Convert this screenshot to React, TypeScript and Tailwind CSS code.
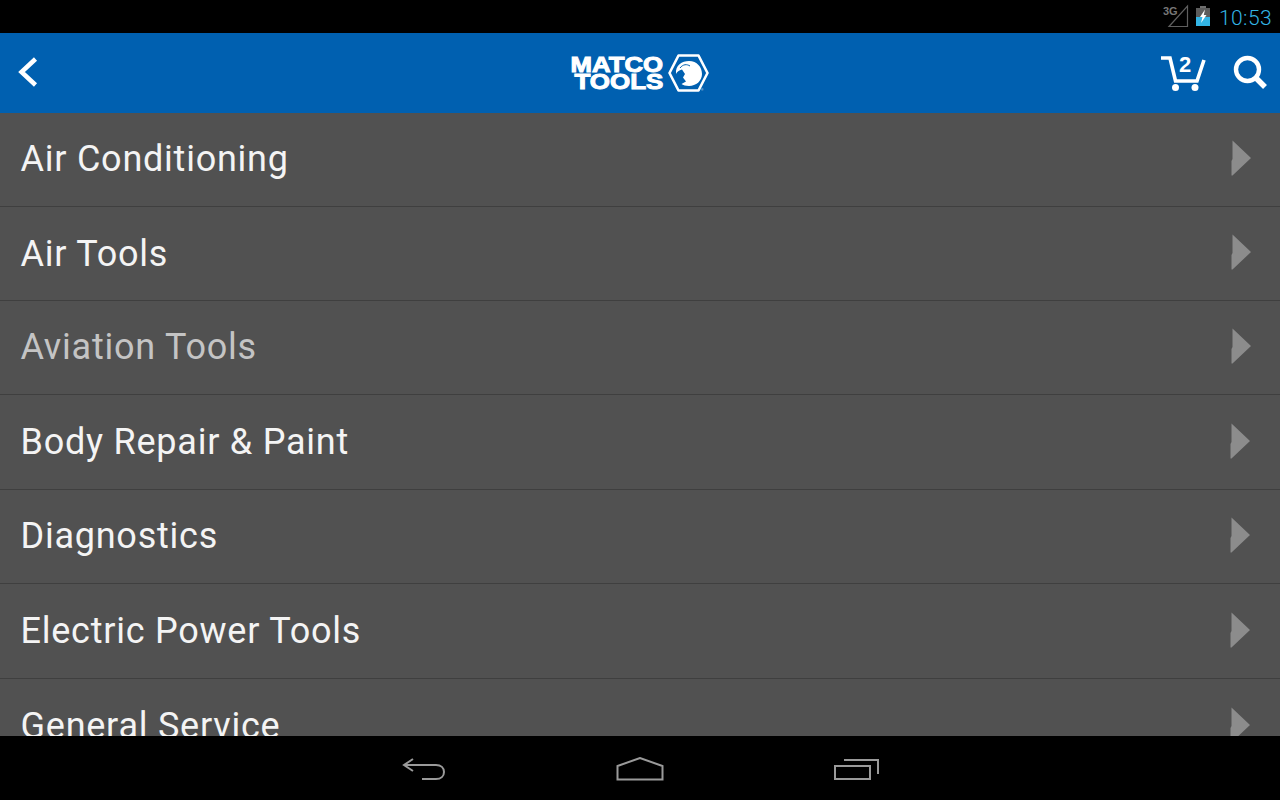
import React from "react";

const rows = [
  { label: "Air Conditioning", h: "h-[94px]", color: "text-[#f4f4f4]", ax: "pr-[28px]", tp: "pb-[1px]", ap: "pb-[4px]" },
  { label: "Air Tools", h: "h-[94px]", color: "text-[#f4f4f4]", ax: "pr-[28px]", tp: "pb-0", ap: "pb-[3px]" },
  { label: "Aviation Tools", h: "h-[94px]", color: "text-[#c4c4c4]", ax: "pr-[28px]", tp: "pb-[1px]", ap: "pb-[4px]" },
  { label: "Body Repair & Paint", h: "h-[95px]", color: "text-[#f4f4f4]", ax: "pr-[29px]", tp: "pb-[1px]", ap: "pb-[2px]" },
  { label: "Diagnostics", h: "h-[94px]", color: "text-[#f4f4f4]", ax: "pr-[29px]", tp: "pb-[1px]", ap: "pb-[4px]" },
  { label: "Electric Power Tools", h: "h-[95px]", color: "text-[#f4f4f4]", ax: "pr-[29px]", tp: "pb-[1px]", ap: "pb-[3px]" },
  { label: "General Service", h: "h-[95px]", color: "text-[#f4f4f4]", ax: "pr-[29px]", tp: "pb-[1px]", ap: "pb-[3px]" },
];

function Arrow({ pad }: { pad: string }) {
  return (
    <div className={`${pad} shrink-0`}>
      <svg width="21" height="36" viewBox="0 0 21 36" className="block">
        <path d="M1.5 0.5 L20 18 L1.5 35.5 L0.5 35.5 L0.5 21 L1.5 19 Z" fill="#8c8c8c" />
      </svg>
    </div>
  );
}

function Logo() {
  return (
    <div className="flex items-center gap-[5px] w-[137px] mr-[4px]">
      <div className="flex flex-col items-end w-[91px] shrink-0 font-['Liberation_Sans',sans-serif] font-bold text-white text-[22px] leading-[17px] [-webkit-text-stroke:1px_white]">
        <span className="block h-[17px] whitespace-nowrap scale-x-[1.17] origin-right">MATCO</span>
        <span className="block h-[17px] whitespace-nowrap scale-x-[1.18] origin-right">TOOLS</span>
      </div>
      <svg width="41" height="38" viewBox="0 0 41 38" className="shrink-0">
        <path d="M10.5 1.5 H30.5 L39.5 19 L30.5 36.5 H10.5 L1.5 19 Z" fill="none" stroke="white" strokeWidth="2.6" strokeLinejoin="round" />
        <path d="M8 20 C7 11 14 7 21 7 C29 7 34 13 34 20 C34 27 28 32 21 32 C18 32 15 31 13.5 30 L18 27.5 L15 23.5 L17 20 L14 15.5 C11 16 9 18 8 20 Z" fill="white" />
        <path d="M12 14 C15 10 19 10 22 12" fill="none" stroke="#0060b0" strokeWidth="1" />
        <text x="33" y="37" fontSize="3" fill="white" fontFamily="Liberation Sans, sans-serif">®</text>
      </svg>
    </div>
  );
}

export default function App() {
  return (
    <div className="w-[1280px] h-[800px] flex flex-col overflow-hidden bg-black font-['Roboto',sans-serif]">
      {/* Status bar */}
      <div className="h-[33px] shrink-0 bg-black flex items-end justify-end pr-[8px]">
        <div className="relative w-[26px] h-[28px] mr-[7px] mb-[5px]">
          <span className="absolute left-0 top-[5px] text-[11px] leading-[12px] font-bold text-[#777777] font-['Liberation_Sans',sans-serif]">3G</span>
          <svg width="26" height="28" viewBox="0 0 26 28" className="absolute inset-0">
            <path d="M24.5 6 V26.5 H6 Z" fill="none" stroke="#5f5f5f" strokeWidth="1.2" />
          </svg>
        </div>
        <svg width="14" height="20" viewBox="0 0 14 20" className="mb-[7px] mr-[9px]">
          <rect x="4" y="0" width="6" height="2" fill="#6e6e6e" />
          <rect x="0" y="2" width="14" height="18" fill="#5c5c5c" />
          <rect x="0" y="11" width="14" height="9" fill="#33b5e5" />
          <path d="M9 3.5 L4 11 H6.5 L5 17 L10.5 9 H7.8 Z" fill="white" />
        </svg>
        <span className="text-[21px] leading-[33px] text-[#33b5e5] tracking-[0.4px] font-light mb-[-2px]">10:53</span>
      </div>

      {/* Action bar */}
      <div className="h-[80px] shrink-0 bg-[#0060b0] flex items-center pl-[18px] pr-[13px]">
        <div className="flex-1 flex items-center pb-[2px]">
          <svg width="20" height="30" viewBox="0 0 20 30">
            <path d="M17.5 2 L3.5 15 L17.5 28" fill="none" stroke="white" strokeWidth="4.5" />
          </svg>
        </div>
        <Logo />
        <div className="flex-1 flex items-center justify-end gap-[27px]">
          <div className="relative w-[46px] h-[38px]">
            <svg width="46" height="38" viewBox="0 0 46 38">
              <path d="M1 4 H10 L15.5 27 H37 L44 6" fill="none" stroke="white" strokeWidth="3.6" strokeLinejoin="miter" />
              <circle cx="15.5" cy="33.5" r="3.5" fill="white" />
              <circle cx="35" cy="33.5" r="3.5" fill="white" />
            </svg>
            <span className="absolute left-[19px] top-[-1px] text-[22px] leading-[24px] font-bold text-white font-['Liberation_Sans',sans-serif]">2</span>
          </div>
          <svg width="34" height="34" viewBox="0 0 34 34" className="mb-[3px]">
            <circle cx="14.5" cy="14.5" r="11.5" fill="none" stroke="white" strokeWidth="4.4" />
            <path d="M23 23 L32 32" stroke="white" strokeWidth="5.5" />
          </svg>
        </div>
      </div>

      {/* List */}
      <div className="flex-1 min-h-0 overflow-hidden bg-[#515151]">
        {rows.map((r) => (
          <div
            key={r.label}
            className={`${r.h} flex items-center justify-between pl-[20.5px] ${r.ax} border-b border-[#3f3f3f]`}
          >
            <span className={`text-[36px] leading-[44px] tracking-[0.76px] ${r.tp} ${r.color}`}>{r.label}</span>
            <Arrow pad={r.ap} />
          </div>
        ))}
      </div>

      {/* Nav bar */}
      <div className="h-[64px] shrink-0 bg-black flex items-center justify-center pl-[1px] pt-[1px]">
        <div className="flex items-center gap-[170px]">
          <svg width="44" height="24" viewBox="0 0 44 24">
            <path d="M11 2 L2 8 L11 14 M2 8 H34 C39 8 42 11 42 15 C42 19 39 22 34 22 H20" fill="none" stroke="#9a9a9a" strokeWidth="2" />
          </svg>
          <svg width="48" height="24" viewBox="0 0 48 24">
            <path d="M1.5 22.5 V9 L24 1 L46.5 9 V22.5 Z" fill="none" stroke="#9a9a9a" strokeWidth="2" />
          </svg>
          <svg width="46" height="24" viewBox="0 0 46 24">
            <path d="M1 9 H36 V22 H1 Z" fill="none" stroke="#9a9a9a" strokeWidth="2" />
            <path d="M10 3 H44 V17" fill="none" stroke="#9a9a9a" strokeWidth="2" />
          </svg>
        </div>
      </div>
    </div>
  );
}
